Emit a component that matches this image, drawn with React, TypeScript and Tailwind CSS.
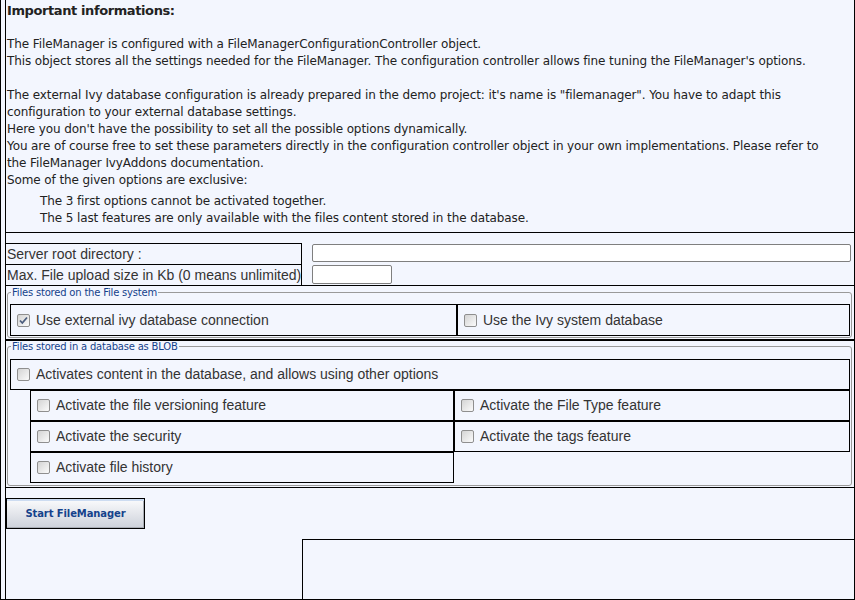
function Check({ checked = false }: { checked?: boolean }) {
  return (
    <span className="w-[13px] h-[13px] shrink-0 border border-[#8f8f8f] rounded-[2px] bg-gradient-to-br from-[#d4d4d4] to-[#fbfbfb] flex items-center justify-center">
      {checked && (
        <svg width="11" height="11" viewBox="0 0 11 11">
          <path d="M2 5.5 L4.3 8 L9 2.5" fill="none" stroke="#4b5d7e" strokeWidth="1.8" />
        </svg>
      )}
    </span>
  );
}

function Cell({ label, checked, className = "" }: { label: string; checked?: boolean; className?: string }) {
  return (
    <div className={`h-[31px] border border-black flex items-center gap-[6px] pl-[6px] ${className}`}>
      <Check checked={checked} />
      <span className="text-[14px] text-[#333]">{label}</span>
    </div>
  );
}

function Fieldset({ legend, children, className = "" }: { legend: string; children: React.ReactNode; className?: string }) {
  return (
    <div className={`relative ml-px mr-[2px] border border-[#9a9a9a] rounded-[3px] pl-[2px] pr-px ${className}`}>
      <span className="absolute -top-[6px] left-[3px] px-px bg-[#f3f6fe] text-[10px] leading-[12px] text-[#15428b] font-['DejaVu_Sans'] tracking-[-0.2px]">
        {legend}
      </span>
      {children}
    </div>
  );
}

export default function App() {
  return (
    <div className="w-[855px] h-[600px] overflow-hidden bg-[#f3f6fe] border-l border-r border-b border-black pl-[4px] font-['Liberation_Sans',sans-serif]">
      <div className="h-full border-l border-black flex flex-col">
        {/* Info text */}
        <div className="border-b border-black pl-px pt-[2px] pb-[5px] text-[12px] leading-[17px] text-[#222] font-['DejaVu_Sans',sans-serif] tracking-[-0.1px]">
          <div className="font-bold text-[13px] tracking-[-0.4px]">Important informations:</div>
          <div className="h-[17px]" />
          <div>The FileManager is configured with a FileManagerConfigurationController object.</div>
          <div>This object stores all the settings needed for the FileManager. The configuration controller allows fine tuning the FileManager's options.</div>
          <div className="h-[17px]" />
          <div>The external Ivy database configuration is already prepared in the demo project: it's name is "filemanager". You have to adapt this</div>
          <div>configuration to your external database settings.</div>
          <div>Here you don't have the possibility to set all the possible options dynamically.</div>
          <div>You are of course free to set these parameters directly in the configuration controller object in your own implementations. Please refer to</div>
          <div>the FileManager IvyAddons documentation.</div>
          <div>Some of the given options are exclusive:</div>
          <div className="mt-[4px] pl-[33px]">
            <div>The 3 first options cannot be activated together.</div>
            <div>The 5 last features are only available with the files content stored in the database.</div>
          </div>
        </div>

        {/* Settings table */}
        <div className="mt-[10px] border-b border-black text-[14px] text-[#333]">
          <div className="h-[21px] flex">
            <div className="w-[296px] border-t border-r border-black pl-px flex items-center whitespace-nowrap">Server root directory :</div>
            <div className="flex-1 pl-[10px] pr-[3px] pt-px">
              <div className="h-[18px] border border-[#7f7f7f] rounded-[2px] bg-white" />
            </div>
          </div>
          <div className="h-[21px] flex">
            <div className="w-[296px] border-t border-r border-black pl-px flex items-center whitespace-nowrap">Max. File upload size in Kb (0 means unlimited)</div>
            <div className="flex-1 pl-[10px] pt-px">
              <div className="w-[80px] h-[19px] border border-[#7f7f7f] rounded-[2px] bg-white" />
            </div>
          </div>
        </div>

        {/* File system */}
        <div className="border-b-2 border-black pt-[6px] pb-px">
          <Fieldset legend="Files stored on the File system" className="pt-[11px] pb-px">
            <div className="flex">
              <Cell className="w-[447px] h-[32px]" label="Use external ivy database connection" checked />
              <Cell className="flex-1 h-[32px]" label="Use the Ivy system database" />
            </div>
          </Fieldset>
        </div>

        {/* Database as BLOB */}
        <div className="border-b border-black pt-[5px] pb-px">
          <Fieldset legend="Files stored in a database as BLOB" className="pt-[12px] pb-[2px]">
            <Cell label="Activates content in the database, and allows using other options" />
            <div className="pl-[20px] grid grid-cols-[424px_1fr]">
              <Cell label="Activate the file versioning feature" />
              <Cell label="Activate the File Type feature" />
              <Cell label="Activate the security" />
              <Cell label="Activate the tags feature" />
              <Cell label="Activate file history" />
            </div>
          </Fieldset>
        </div>

        {/* Action */}
        <div className="mt-[10px]">
          <button className="w-[139px] h-[31px] border border-black shadow-[inset_0_2px_0_#cddcf1,inset_-1px_-1px_0_#a9adb5] bg-gradient-to-b from-[#fbfcfd] to-[#cdd1da] text-[10px] font-bold text-[#15428b] font-['DejaVu_Sans',sans-serif] tracking-[-0.1px]">
            Start FileManager
          </button>
        </div>

        <div className="mt-[10px] ml-[296px] flex-1 border-t border-l border-black" />
      </div>
    </div>
  );
}
